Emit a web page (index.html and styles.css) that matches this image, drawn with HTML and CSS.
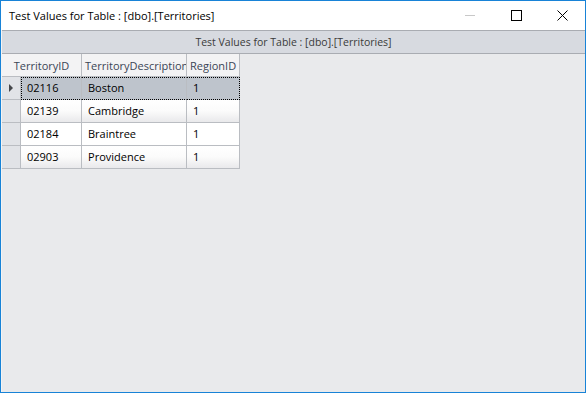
FILE: index.html
```html
<!DOCTYPE html>
<html lang="en">
<head>
  <meta charset="UTF-8" />
  <title>Test Values for Table : [dbo].[Territories]</title>
  <link rel="stylesheet" href="styles.css">
</head>
<body>
  <div class="window">
    <div class="titlebar">
      <span class="title">Test Values for Table : [dbo].[Territories]</span>
      <div class="controls">
        <span class="ctl"><svg width="11" height="11" viewBox="0 0 11 11"><line x1="0" y1="5.5" x2="10" y2="5.5" stroke="#c8c8c8" stroke-width="1"/></svg></span>
        <span class="ctl"><svg width="11" height="11" viewBox="0 0 11 11"><rect x="0.5" y="0.5" width="10" height="10" fill="none" stroke="#000" stroke-width="1"/></svg></span>
        <span class="ctl"><svg width="11" height="11" viewBox="0 0 11 11"><path d="M0.5 0.5 L10.5 10.5 M10.5 0.5 L0.5 10.5" stroke="#000" stroke-width="1"/></svg></span>
      </div>
    </div>
    <div class="content">
      <div class="caption">Test Values for Table : [dbo].[Territories]</div>
      <table class="grid">
        <colgroup>
          <col class="w0"><col class="w1"><col class="w2"><col class="w3">
        </colgroup>
        <thead>
          <tr>
            <th colspan="2" class="h1">TerritoryID</th>
            <th class="h2">TerritoryDescription</th>
            <th class="h3">RegionID</th>
          </tr>
        </thead>
        <tbody>
          <tr class="selected">
            <td class="rowhead"><span class="arrow"></span></td>
            <td class="c1">02116</td><td class="c2">Boston</td><td class="c3">1</td>
          </tr>
          <tr class="shade">
            <td class="rowhead"></td><td>02139</td><td>Cambridge</td><td>1</td>
          </tr>
          <tr>
            <td class="rowhead"></td><td>02184</td><td>Braintree</td><td>1</td>
          </tr>
          <tr class="shade">
            <td class="rowhead"></td><td>02903</td><td>Providence</td><td>1</td>
          </tr>
        </tbody>
      </table>
    </div>
  </div>
</body>
</html>
```

FILE: styles.css
```css
body {
  margin: 0;
  font-family: 'Open Sans', 'Noto Sans', sans-serif;
  font-size: 11px;
  color: #000;
}

.window {
  width: 586px;
  height: 393px;
  box-sizing: border-box;
  border: 1px solid #1883d7;
  display: flex;
  flex-direction: column;
  background: #e9eaec;
}

.titlebar {
  height: 29px;
  flex: none;
  background: #fff;
  display: flex;
  align-items: center;
  justify-content: space-between;
}
.title {
  padding-left: 8px;
  font-size: 11px;
  color: #000;
}
.controls {
  display: flex;
  height: 100%;
}
.ctl {
  width: 46px;
  display: flex;
  align-items: center;
  justify-content: center;
}

.content {
  flex: 1;
  border-left: 1px solid #f4f4f4;
}

.caption {
  height: 22px;
  line-height: 22px;
  font-size: 10.5px;
  background: #d7dae0;
  border-top: 1px solid #a9acb2;
  border-bottom: 1px solid #a9acb2;
  text-align: center;
  color: #3a3a3a;
}

/* data grid */
.grid {
  width: 238px;
  border-collapse: separate;
  border-spacing: 0;
  table-layout: fixed;
}
.grid .w0 { width: 19px; }
.grid .w1 { width: 61px; }
.grid .w2 { width: 105px; }
.grid .w3 { width: 53px; }

.grid th, .grid td {
  box-sizing: border-box;
  border-right: 1px solid #babdc2;
  border-bottom: 1px solid #babdc2;
  height: 23px;
  padding: 0 0 2px 6px;
  white-space: nowrap;
  overflow: hidden;
  background: #fff;
}
.grid th {
  background: #f3f3f4;
  font-weight: normal;
  color: #3b4656;
  padding: 0;
}
.grid .h1 { text-align: center; }
.grid .h2, .grid .h3 { text-align: left; padding-left: 3px; }

.grid .rowhead {
  padding: 0 0 0 7px;
  background: #e1e3e7;
}

.shade td:not(.rowhead) {
  background: linear-gradient(#fff, #fbfbfb 50%, #e9e9eb);
}

.selected td:not(.rowhead) {
  background: #bec4cc;
  border-top: 1px dotted #000;
  border-bottom: 1px dotted #000;
}
.selected td.c1 {
  border-left: 1px dotted #000;
  padding-left: 5px;
}
.selected td.c3 {
  border-right: 1px dotted #000;
}

.arrow {
  display: block;
  width: 0;
  height: 0;
  border-top: 4.5px solid transparent;
  border-bottom: 4.5px solid transparent;
  border-left: 4px solid #45474b;
}
```
